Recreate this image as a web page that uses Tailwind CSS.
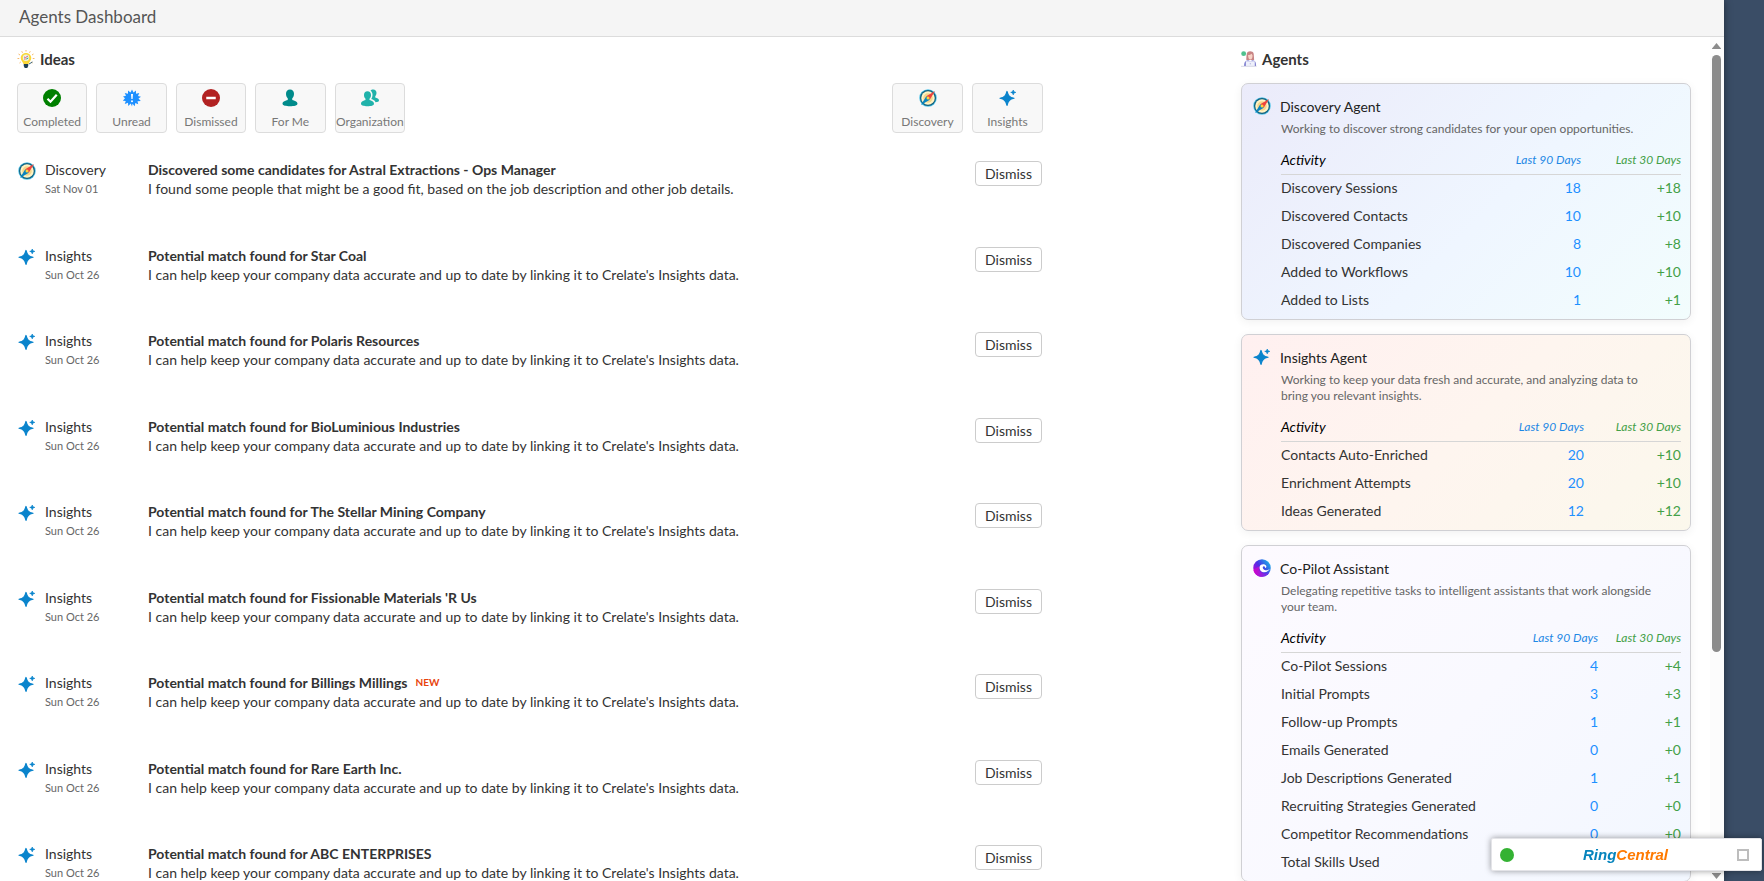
<!DOCTYPE html>
<html lang="en">
<head>
  <meta charset="UTF-8" />
  <meta name="viewport" content="width=device-width, initial-scale=1.0"/>
  <title>Agents Dashboard</title>
  <script src="https://cdn.jsdelivr.net/npm/@tailwindcss/browser@4"></script>
</head>
<body class="h-screen overflow-hidden flex bg-[#3a4d66] font-['Lato',sans-serif] text-[14px] text-[#333]">

  <!-- Icon sprite -->
  <svg class="absolute size-0" aria-hidden="true">
    <defs>
      <linearGradient id="swirl-a" x1="0" y1="0.8" x2="1" y2="0.1">
        <stop offset="0" stop-color="#c000d8"/>
        <stop offset="0.45" stop-color="#4a32e6"/>
        <stop offset="1" stop-color="#12c4e8"/>
      </linearGradient>
      <linearGradient id="swirl-b" x1="0" y1="0.5" x2="1" y2="0.5">
        <stop offset="0" stop-color="#d400c8"/>
        <stop offset="1" stop-color="#5b3df0"/>
      </linearGradient>
    </defs>
    <symbol id="icon-compass" viewBox="0 0 36 36">
      <circle cx="18" cy="18" r="17.5" fill="#4fc3e8"/>
      <circle cx="18" cy="18" r="16" fill="#12607f"/>
      <circle cx="18" cy="18" r="13.5" fill="#fff3c4"/>
      <circle cx="18" cy="18" r="9.5" fill="#f6d78b"/>
      <path d="M32 4 21.500 21.500 14.500 14.500z" fill="#f0443c"/>
      <path d="M4 32 14.500 14.500 21.500 21.500z" fill="#0a84c0"/>
      <circle cx="18" cy="18" r="3" fill="#ffd23c"/>
    </symbol>
    <symbol id="icon-sparkle" viewBox="0 0 36 36">
      <path d="M16 5c2 8.500 5 11.500 14 13.500-9 2-12 5-14 14-2-9-5-12-14-14C11 16.500 14 13.500 16 5z" fill="#0a84cc" stroke="#0a84cc" stroke-width="2.500" stroke-linejoin="round"/>
      <path d="M28.500 2c.6 3 1.500 4 5 4.800-3.500.8-4.400 1.800-5 4.800-.6-3-1.500-4-5-4.800 3.500-.8 4.400-1.800 5-4.800z" fill="#0a84cc" stroke="#0a84cc" stroke-width="1.500" stroke-linejoin="round"/>
    </symbol>
    <symbol id="icon-swirl" viewBox="0 0 36 36">
      <circle cx="18" cy="18" r="17.500" fill="url(#swirl-a)"/>
      <path d="M1 22c1 8 9 14 17 13.500 7-.5 12-4 15-9-6 3.500-13 4-18-1-3-3-3.500-8-1-11C8 16 4 20 1 22z" fill="url(#swirl-b)"/>
      <path d="M26 13c-3-4-11-3.500-12.500 2C12 21 16 27 23 26.500c5-.3 9-3.500 11-7-3 3-8 4-11.500 2-3-1.700-4-5-2-6.500 2-1.300 4.500.5 3.500 3 3-.5 3.500-3 2-5z" fill="#fff"/>
    </symbol>
    <symbol id="icon-bulb" viewBox="0 0 36 36">
      <path d="M18 0v3M9.500 2.500l1.500 3M26.500 2.500l-1.500 3M3 8l3 2M33 8l-3 2M1 17h3.500M35 17h-3.500M5 26l2.500-2M31 26l-2.500-2" stroke="#f5a742" stroke-width="1.600" fill="none"/>
      <path d="M18 6c-6 0-10.500 4.500-10.500 10 0 5 4 7.500 5.500 12h10c1.500-4.500 5.500-7 5.500-12C28.500 10.500 24 6 18 6z" fill="#fbd737"/>
      <circle cx="18" cy="15.500" r="6.500" fill="#e9f3e6"/>
      <path d="M14 14l3 1 5-3M14 18h3.500" stroke="#e0556a" stroke-width="1.800" fill="none"/>
      <path d="M18.500 18l4-2" stroke="#3aa08e" stroke-width="2"/>
      <path d="M13.500 28h9v4l-2 4h-5l-2-4z" fill="#1f3f55"/>
      <path d="M24 28l7-4" stroke="#27566b" stroke-width="1.800"/>
    </symbol>
    <symbol id="icon-agent" viewBox="0 0 36 36">
      <circle cx="6" cy="6" r="5.500" fill="#4fc18e"/>
      <path d="M12 20c0-4 0-8 1-14C14 2 17 .5 20.500.5S28 2 28.500 6c.5 6 1 10 1 14z" fill="#c88484"/>
      <path d="M16 9c3 0 6-1 8-3l2 4c0 6-2 9-5 9s-5-3-5-10z" fill="#f8d3c6"/>
      <path d="M7 34c0-9 3-12 9-13l5 2 5-2c6 1 8 4 8 13z" fill="#7f7fd0"/>
      <path d="M11 23h20v11H11z" fill="#eef0fb"/>
      <circle cx="21" cy="28.500" r="1.600" fill="#b9bddf"/>
      <path d="M0 34.500h35" stroke="#c6c6dc" stroke-width="1.600"/>
    </symbol>
    <symbol id="icon-check" viewBox="0 0 36 36">
      <circle cx="18" cy="18" r="18" fill="#008000"/>
      <path d="M9 19.500l6 6L27.500 11.500" stroke="#fff" stroke-width="4.400" fill="none"/>
    </symbol>
    <symbol id="icon-unread" viewBox="0 0 36 36">
      <path d="M18 1l3 6L26 3v6.500l6.500-1.500-2.500 6 6 1.500-5 3.500 4.500 5-6.500.5 1.500 6-6-2.500-1 6.500-4.500-5L18 35l-2.500-6-5 5-.5-6.500-6.500 2.500 2-6-6-.5 4.500-5L0 15l6-1.500L3.500 8l6.500 1.500V3l5 4z" fill="#1e90ff"/>
      <path d="M16 10h4l-.8 10h-2.400z" fill="#fff"/>
      <circle cx="18" cy="24.500" r="2" fill="#fff"/>
    </symbol>
    <symbol id="icon-minus" viewBox="0 0 36 36">
      <circle cx="18" cy="18" r="18" fill="#b22222"/>
      <path d="M8.500 15.500h19v5h-19z" fill="#fff"/>
    </symbol>
    <symbol id="icon-person" viewBox="0 0 36 36">
      <path d="M18 1c-5 0-8 3.500-8 8.500 0 4 1.500 7 3.500 9v3.500C9 23.500 3 25 3 29.500c0 3.500 7 5 15 5s15-1.500 15-5c0-4.500-6-6-10.500-7.500v-3.500c2-2 3.500-5 3.500-9C26 4.500 23 1 18 1z" fill="#008b8b"/>
    </symbol>
    <symbol id="icon-people" viewBox="0 0 36 36">
      <path d="M24.500 1c-2.500 0-4.500 1-5.500 2.500 3 2 4.300 5 4 9-.1 3-1 5.500-2.500 7.500 4 1.300 7.500 3 8.500 6.500 4-.5 7-1.500 7-3.500 0-3.500-4-5-7.500-6v-2.500c1.500-1.500 2.500-4 2.500-7C31 3.500 28.500 1 24.500 1z" fill="#20b2aa"/>
      <path d="M13 4.500c-4.500 0-7 3-7 7.500 0 3.500 1.200 6 3 7.500V22C5 23.500 0 25 0 29.500 0 33 6 34.500 13 34.500S26 33 26 29.500c0-4.500-5-6-9-7.500v-2.500c1.800-1.500 3-4 3-7.500 0-4.500-2.500-7.500-7-7.500z" fill="#20b2aa"/>
    </symbol>
  </svg>

  <!-- Main panel -->
  <div class="flex-1 min-w-0 h-full flex flex-col bg-white shadow-[0_0_8px_rgba(0,0,0,0.45)]">
    <header class="h-[37px] shrink-0 bg-[#f5f5f5] border-b border-[#dcdcdc] px-[19px]">
      <h1 class="text-[17px] leading-[34px] text-[#555]">Agents Dashboard</h1>
    </header>

    <div class="flex-1 min-h-0 flex">
      <main class="flex-1 min-w-0 flex justify-between pl-[17px] pr-[19px] pt-[12px] overflow-hidden">

        <!-- Ideas -->
        <section class="w-[1026px]">
          <h2 class="flex items-center gap-[5px] h-[20px] text-[15px] font-bold">
            <svg class="size-[18px]"><use href="#icon-bulb"/></svg>
            Ideas
          </h2>
          <div class="flex justify-between mt-[14px]">
            <div id="status-filters" class="grid grid-cols-5 gap-[9px] w-[388px]"></div>
            <div id="agent-filters" class="grid grid-cols-2 gap-[9px] w-[151px]"></div>
          </div>
          <ul id="ideas" class="mt-[27px]"></ul>
        </section>

        <!-- Agents -->
        <aside class="w-[450px]">
          <h2 class="flex items-center gap-[5px] h-[20px] text-[15px] font-bold">
            <svg class="size-[16px]"><use href="#icon-agent"/></svg>
            Agents
          </h2>
          <div id="agents" class="mt-[14px] space-y-[14px]"></div>
        </aside>
      </main>

      <!-- Scrollbar -->
      <div class="w-[14px] flex flex-col items-start bg-[#fcfcfc] pl-[2px] pt-[6px] pb-[2px]" aria-hidden="true">
        <svg class="w-[9px] h-[6px]" viewBox="0 0 9 6"><path d="M4.500 0 9 5.500V6H0v-.5z" fill="#8b8b8b"/></svg>
        <div class="w-[9px] h-[597px] mt-[6px] rounded-full bg-[#8b8b8b]"></div>
        <svg class="w-[9px] h-[6px] mt-auto" viewBox="0 0 9 6"><path d="M4.500 6 9 .5V0H0v.5z" fill="#8b8b8b"/></svg>
      </div>
    </div>
  </div>
  <div class="w-[40px] shrink-0"></div>

  <!-- Phone widget -->
  <div class="fixed right-[2px] bottom-[10px] w-[271px] h-[33px] pl-[8px] pr-[12px] flex items-center justify-between bg-white rounded-[2px] border border-[#e4e4e8] shadow-[0_0_6px_rgba(0,0,0,0.4)]">
    <span class="size-[14px] rounded-full bg-[#34b233]"></span>
    <span class="font-['Liberation_Sans',sans-serif] text-[15px] leading-[20px] font-black italic text-[#0684bd]">Ring<span class="text-[#ff7a00]">Central</span></span>
    <button type="button" aria-label="Maximize" class="size-[12px] border-2 border-[#bdbdbd]"></button>
  </div>

  <script>
    const statusFilters = [
      { label: "Completed", icon: "check" },
      { label: "Unread", icon: "unread" },
      { label: "Dismissed", icon: "minus" },
      { label: "For Me", icon: "person" },
      { label: "Organization", icon: "people" }
    ];

    const agentFilters = [
      { label: "Discovery", icon: "compass" },
      { label: "Insights", icon: "sparkle" }
    ];

    const matchText = "I can help keep your company data accurate and up to date by linking it to Crelate's Insights data.";

    const ideas = [
      { agent: "Discovery", icon: "compass", date: "Sat Nov 01", title: "Discovered some candidates for Astral Extractions - Ops Manager", text: "I found some people that might be a good fit, based on the job description and other job details." },
      ...["Star Coal", "Polaris Resources", "BioLuminious Industries", "The Stellar Mining Company", "Fissionable Materials 'R Us", "Billings Millings", "Rare Earth Inc.", "ABC ENTERPRISES"].map(name => ({
        agent: "Insights", icon: "sparkle", date: "Sun Oct 26", title: `Potential match found for ${name}`, text: matchText, isNew: name === "Billings Millings"
      }))
    ];

    const agents = [
      {
        name: "Discovery Agent", icon: "compass", col: "w-[100px]",
        bg: "bg-[linear-gradient(135deg,#ebebfa,#eff6ff_55%,#f2fdfd)]",
        text: "Working to discover strong candidates for your open opportunities.",
        rows: [["Discovery Sessions", 18, 18], ["Discovered Contacts", 10, 10], ["Discovered Companies", 8, 8], ["Added to Workflows", 10, 10], ["Added to Lists", 1, 1]]
      },
      {
        name: "Insights Agent", icon: "sparkle", col: "w-[97px]",
        bg: "bg-[linear-gradient(135deg,#fff0f0,#fef5ef_50%,#fbf8ec)]",
        text: "Working to keep your data fresh and accurate, and analyzing data to bring you relevant insights.",
        rows: [["Contacts Auto-Enriched", 20, 10], ["Enrichment Attempts", 20, 10], ["Ideas Generated", 12, 12]]
      },
      {
        name: "Co-Pilot Assistant", icon: "swirl", col: "w-[83px]",
        bg: "bg-[linear-gradient(135deg,#fdfaff,#f9f9ff_50%,#f2f7ff)]",
        text: "Delegating repetitive tasks to intelligent assistants that work alongside your team.",
        rows: [["Co-Pilot Sessions", 4, 4], ["Initial Prompts", 3, 3], ["Follow-up Prompts", 1, 1], ["Emails Generated", 0, 0], ["Job Descriptions Generated", 1, 1], ["Recruiting Strategies Generated", 0, 0], ["Competitor Recommendations", 0, 0], ["Total Skills Used", 4, 4]]
      }
    ];

    const filterButton = f => `
      <button type="button" class="h-[50px] flex flex-col items-center justify-between pt-[5px] pb-[2px] rounded-[4px] border border-[#dcdcdc] bg-[#f8f8f8] text-[12px] leading-[16px] text-[#777]">
        <svg class="size-[18px]"><use href="#icon-${f.icon}"/></svg>
        ${f.label}
      </button>`;

    document.getElementById("status-filters").innerHTML = statusFilters.map(filterButton).join("");
    document.getElementById("agent-filters").innerHTML = agentFilters.map(filterButton).join("");

    document.getElementById("ideas").innerHTML = ideas.map(idea => `
      <li class="flex items-start h-[85px] odd:h-[86px] px-[1px]">
        <svg class="size-[18px] mt-[2px] shrink-0"><use href="#icon-${idea.icon}"/></svg>
        <div class="w-[103px] ml-[9px] shrink-0 leading-[19px]">
          <p>${idea.agent}</p>
          <p class="text-[11px] leading-[19px] text-[#666]">${idea.date}</p>
        </div>
        <div class="flex-1 leading-[19px]">
          <h3 class="flex items-center gap-2 font-bold">${idea.title}${idea.isNew ? '<span class="text-[10px] text-[#e8430c]">NEW</span>' : ""}</h3>
          <p>${idea.text}</p>
        </div>
        <button type="button" class="w-[67px] h-[25px] mt-px leading-[22px] rounded-[4px] border border-[#ccc] bg-white">Dismiss</button>
      </li>`).join("");

    document.getElementById("agents").innerHTML = agents.map(agent => `
      <article class="${agent.bg} rounded-[7px] border border-[#d0d0d4] pt-[12px] pb-1 pl-[11px] pr-[9px] shadow-[0_2px_10px_rgba(0,0,0,0.06)]">
        <h3 class="flex items-center gap-[9px] h-[20px] text-[14px] text-[#222]">
          <svg class="size-[18px]"><use href="#icon-${agent.icon}"/></svg>
          ${agent.name}
        </h3>
        <div class="pl-[28px]">
          <p class="mt-[5px] text-[12px] leading-[16px] text-[#666] pr-4">${agent.text}</p>
          <table class="w-full mt-[9px] border-separate border-spacing-0">
            <thead>
              <tr class="h-[29px] italic *:border-b *:border-[#d6d6d6] *:font-normal">
                <th class="pb-[2px] text-left text-black">Activity</th>
                <th class="text-right text-[12px] text-[#1e88e5]">Last 90 Days</th>
                <th class="${agent.col} text-right text-[12px] text-[#43a047]">Last 30 Days</th>
              </tr>
            </thead>
            <tbody>
              ${agent.rows.map(r => `
              <tr class="h-[28px] *:pb-[3px]">
                <td>${r[0]}</td>
                <td class="text-right text-[#1e90ff]">${r[1]}</td>
                <td class="text-right text-[#43a047]">+${r[2]}</td>
              </tr>`).join("")}
            </tbody>
          </table>
        </div>
      </article>`).join("");
  </script>

</body>
</html>
